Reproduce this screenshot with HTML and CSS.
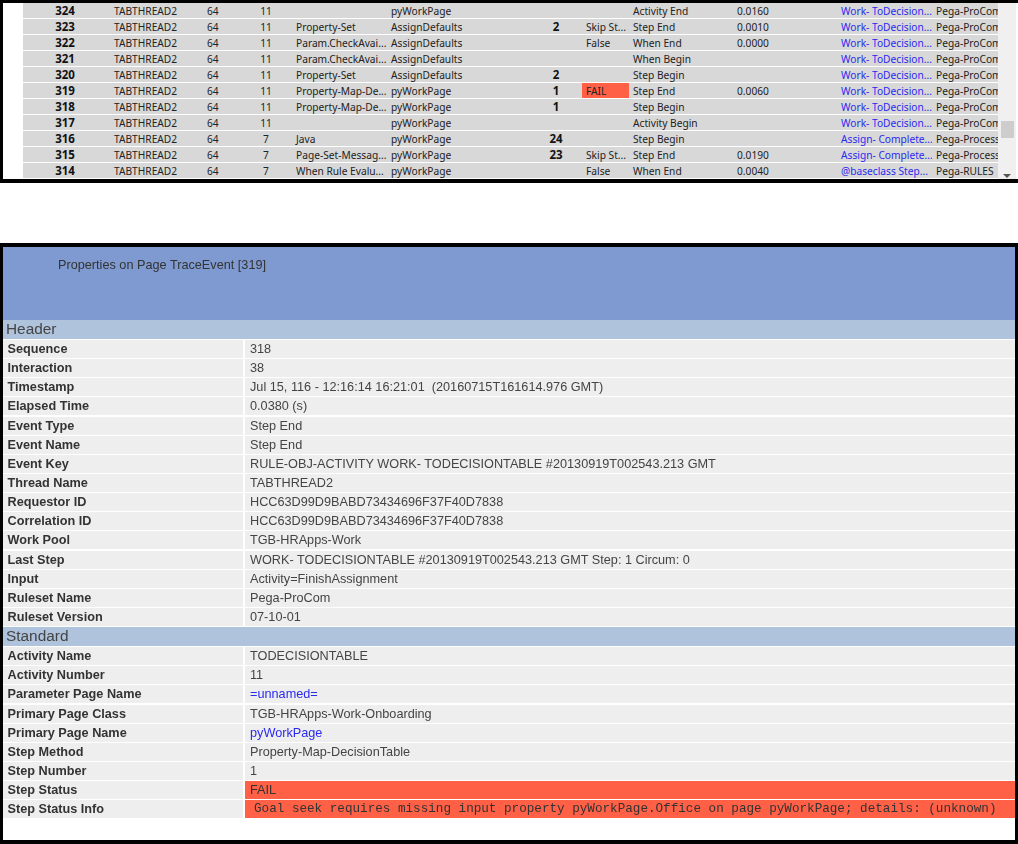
FILE: index.html
```html
<!DOCTYPE html>
<html lang="en">
<head>
    <meta charset="UTF-8">
    <title>Tracer</title>
    <link rel="stylesheet" href="styles.css">
</head>
<body>

    <!-- Tracer event list -->
    <div class="tracer">
        <table class="trace-table">
            <colgroup>
                <col class="c1"><col class="c2"><col class="c3"><col class="c4"><col class="c5"><col class="c6">
                <col class="c7"><col class="c8"><col class="c9"><col class="c10"><col class="c11"><col class="c12">
            </colgroup>
            <tr><td class="seq">324</td><td>TABTHREAD2</td><td>64</td><td class="mid">11</td><td></td><td>pyWorkPage</td><td class="num"></td><td></td><td>Activity End</td><td>0.0160</td><td class="link">Work- ToDecision...</td><td>Pega-ProCom</td></tr>
            <tr><td class="seq">323</td><td>TABTHREAD2</td><td>64</td><td class="mid">11</td><td>Property-Set</td><td>AssignDefaults</td><td class="num">2</td><td>Skip St...</td><td>Step End</td><td>0.0010</td><td class="link">Work- ToDecision...</td><td>Pega-ProCom</td></tr>
            <tr><td class="seq">322</td><td>TABTHREAD2</td><td>64</td><td class="mid">11</td><td>Param.CheckAvai...</td><td>AssignDefaults</td><td class="num"></td><td>False</td><td>When End</td><td>0.0000</td><td class="link">Work- ToDecision...</td><td>Pega-ProCom</td></tr>
            <tr><td class="seq">321</td><td>TABTHREAD2</td><td>64</td><td class="mid">11</td><td>Param.CheckAvai...</td><td>AssignDefaults</td><td class="num"></td><td></td><td>When Begin</td><td></td><td class="link">Work- ToDecision...</td><td>Pega-ProCom</td></tr>
            <tr><td class="seq">320</td><td>TABTHREAD2</td><td>64</td><td class="mid">11</td><td>Property-Set</td><td>AssignDefaults</td><td class="num">2</td><td></td><td>Step Begin</td><td></td><td class="link">Work- ToDecision...</td><td>Pega-ProCom</td></tr>
            <tr><td class="seq">319</td><td>TABTHREAD2</td><td>64</td><td class="mid">11</td><td>Property-Map-De...</td><td>pyWorkPage</td><td class="num">1</td><td class="fail">FAIL</td><td>Step End</td><td>0.0060</td><td class="link">Work- ToDecision...</td><td>Pega-ProCom</td></tr>
            <tr><td class="seq">318</td><td>TABTHREAD2</td><td>64</td><td class="mid">11</td><td>Property-Map-De...</td><td>pyWorkPage</td><td class="num">1</td><td></td><td>Step Begin</td><td></td><td class="link">Work- ToDecision...</td><td>Pega-ProCom</td></tr>
            <tr><td class="seq">317</td><td>TABTHREAD2</td><td>64</td><td class="mid">11</td><td></td><td>pyWorkPage</td><td class="num"></td><td></td><td>Activity Begin</td><td></td><td class="link">Work- ToDecision...</td><td>Pega-ProCom</td></tr>
            <tr><td class="seq">316</td><td>TABTHREAD2</td><td>64</td><td class="mid">7</td><td>Java</td><td>pyWorkPage</td><td class="num">24</td><td></td><td>Step Begin</td><td></td><td class="link">Assign- Complete...</td><td>Pega-ProcessEngine</td></tr>
            <tr><td class="seq">315</td><td>TABTHREAD2</td><td>64</td><td class="mid">7</td><td>Page-Set-Messag...</td><td>pyWorkPage</td><td class="num">23</td><td>Skip St...</td><td>Step End</td><td>0.0190</td><td class="link">Assign- Complete...</td><td>Pega-ProcessEngine</td></tr>
            <tr><td class="seq">314</td><td>TABTHREAD2</td><td>64</td><td class="mid">7</td><td>When Rule Evalu...</td><td>pyWorkPage</td><td class="num"></td><td>False</td><td>When End</td><td>0.0040</td><td class="link">@baseclass Step...</td><td>Pega-RULES</td></tr>
        </table>
        <div class="scrollbar">
            <div class="thumb"></div>
            <div class="arrow"></div>
        </div>
    </div>

    <!-- Properties window -->
    <div class="props">
        <div class="props-title">Properties on Page TraceEvent [319]</div>

        <div class="section">Header</div>
        <div class="prop-row"><div class="label">Sequence</div><div class="value">318</div></div>
        <div class="prop-row"><div class="label">Interaction</div><div class="value">38</div></div>
        <div class="prop-row"><div class="label">Timestamp</div><div class="value">Jul 15, 116 - 12:16:14 16:21:01&nbsp; (20160715T161614.976 GMT)</div></div>
        <div class="prop-row"><div class="label">Elapsed Time</div><div class="value">0.0380 (s)</div></div>
        <div class="prop-row"><div class="label">Event Type</div><div class="value">Step End</div></div>
        <div class="prop-row"><div class="label">Event Name</div><div class="value">Step End</div></div>
        <div class="prop-row"><div class="label">Event Key</div><div class="value">RULE-OBJ-ACTIVITY WORK- TODECISIONTABLE #20130919T002543.213 GMT</div></div>
        <div class="prop-row"><div class="label">Thread Name</div><div class="value">TABTHREAD2</div></div>
        <div class="prop-row"><div class="label">Requestor ID</div><div class="value">HCC63D99D9BABD73434696F37F40D7838</div></div>
        <div class="prop-row"><div class="label">Correlation ID</div><div class="value">HCC63D99D9BABD73434696F37F40D7838</div></div>
        <div class="prop-row"><div class="label">Work Pool</div><div class="value">TGB-HRApps-Work</div></div>
        <div class="prop-row"><div class="label">Last Step</div><div class="value">WORK- TODECISIONTABLE #20130919T002543.213 GMT Step: 1 Circum: 0</div></div>
        <div class="prop-row"><div class="label">Input</div><div class="value">Activity=FinishAssignment</div></div>
        <div class="prop-row"><div class="label">Ruleset Name</div><div class="value">Pega-ProCom</div></div>
        <div class="prop-row"><div class="label">Ruleset Version</div><div class="value">07-10-01</div></div>

        <div class="section">Standard</div>
        <div class="prop-row"><div class="label">Activity Name</div><div class="value">TODECISIONTABLE</div></div>
        <div class="prop-row"><div class="label">Activity Number</div><div class="value">11</div></div>
        <div class="prop-row"><div class="label">Parameter Page Name</div><div class="value link">=unnamed=</div></div>
        <div class="prop-row"><div class="label">Primary Page Class</div><div class="value">TGB-HRApps-Work-Onboarding</div></div>
        <div class="prop-row"><div class="label">Primary Page Name</div><div class="value link">pyWorkPage</div></div>
        <div class="prop-row"><div class="label">Step Method</div><div class="value">Property-Map-DecisionTable</div></div>
        <div class="prop-row"><div class="label">Step Number</div><div class="value">1</div></div>
        <div class="prop-row"><div class="label">Step Status</div><div class="value status">FAIL</div></div>
        <div class="prop-row"><div class="label">Step Status Info</div><div class="value status mono">Goal seek requires missing input property pyWorkPage.Office on page pyWorkPage; details: (unknown)</div></div>
    </div>

</body>
</html>
```

FILE: styles.css
```css
html, body {
    margin: 0;
    height: 844px;
    overflow: hidden;
    background: white;
}

body {
    font-family: "Liberation Sans", Arial, sans-serif;
    color: #333;
}

/* Tracer event list */
.tracer {
    display: flex;
    height: 176px;
    padding-left: 20px;
    padding-right: 2px;
    border-top: 3px solid black;
    border-left: 3px solid black;
    border-bottom: 4px solid black;
    margin-bottom: 60px;
}

.trace-table {
    width: 975px;
    table-layout: fixed;
    border-collapse: separate;
    border-spacing: 0;
    font-family: "Noto Sans", "Liberation Sans", sans-serif;
    font-size: 10.2px;
}

.c1 { width: 87px; }
.c2 { width: 93px; }
.c3 { width: 37px; }
.c4 { width: 52px; }
.c5 { width: 95px; }
.c6 { width: 143px; }
.c7 { width: 52px; }
.c8 { width: 47px; }
.c9 { width: 104px; }
.c10 { width: 104px; }
.c11 { width: 95px; }
.c12 { width: 66px; }

.trace-table td {
    height: 14px;
    padding: 1px 0 0 4px;
    background: #d8d8d8;
    border-bottom: 1px solid white;
    box-sizing: content-box;
    white-space: nowrap;
    overflow: hidden;
    line-height: 14px;
    color: #222;
}

.trace-table td.seq,
.trace-table td.num {
    padding: 1px 0 0 0;
    text-align: center;
    font-weight: bold;
    font-size: 11.5px;
    color: #111;
}

.trace-table td.seq {
    padding-right: 3px;
}

.trace-table td.mid {
    padding: 1px 0 0 0;
    text-align: center;
}

.trace-table td.link {
    color: #2a2af0;
}

.trace-table td.fail {
    background: #ff6046;
}

.scrollbar {
    width: 18px;
    background: #f0f0f0;
    display: flex;
    flex-direction: column;
    align-items: center;
}

.thumb {
    width: 13px;
    height: 17px;
    margin-top: 118px;
    background: #cdcdcd;
}

.arrow {
    margin-top: auto;
    margin-bottom: 1px;
    border-top: 4px solid #555;
    border-left: 4px solid transparent;
    border-right: 4px solid transparent;
}

/* Properties window */
.props {
    height: 593px;
    border: 3px solid black;
    border-top-width: 4px;
    border-bottom-width: 4px;
    font-size: 12.7px;
}

.props-title {
    height: 73px;
    padding: 11px 0 0 55px;
    box-sizing: border-box;
    background: #7f9ad1;
    color: #333;
    filter: blur(0.35px);
}

.section {
    height: 19px;
    line-height: 18px;
    padding-left: 3px;
    margin-bottom: 1px;
    background: #afc3dc;
    font-size: 15.4px;
    color: #444;
    filter: blur(0.35px);
}

.prop-row {
    display: grid;
    grid-template-columns: 240px 1fr;
    column-gap: 2px;
    height: 17.15px;
    margin-bottom: 2px;
    line-height: 18px;
    filter: blur(0.35px);
}

.label {
    padding-left: 4.5px;
    background: #eee;
    font-weight: bold;
    color: #333;
}

.value {
    padding-left: 5px;
    background: #eee;
    color: #444;
}

.value.link {
    color: #2a2af0;
}

.value.status {
    background: #ff6046;
    color: #333;
}

.value.mono {
    padding-left: 9px;
    font-family: "Liberation Mono", "Courier New", monospace;
    font-size: 12.63px;
    white-space: nowrap;
}
```
